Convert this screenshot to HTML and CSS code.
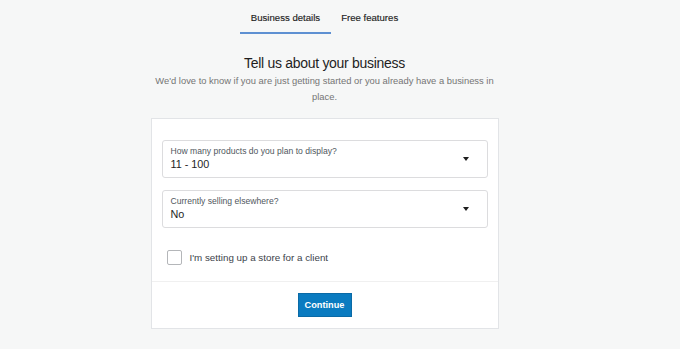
FILE: index.html
```html
<!DOCTYPE html>
<html lang="en">
<head>
  <meta charset="UTF-8" />
  <title>Business details</title>
  <link rel="stylesheet" href="styles.css">
</head>
<body>
  <div class="page">
    <nav class="tabs">
      <div class="tab active">Business details</div>
      <div class="tab">Free features</div>
    </nav>

    <h1 class="title">Tell us about your business</h1>
    <p class="subtitle">We'd love to know if you are just getting started or you already have a business in place.</p>

    <div class="card">
      <div class="card-body">
        <div class="select">
          <div class="select-text">
            <div class="select-label">How many products do you plan to display?</div>
            <div class="select-value">11 - 100</div>
          </div>
          <span class="arrow"></span>
        </div>
        <div class="select">
          <div class="select-text">
            <div class="select-label">Currently selling elsewhere?</div>
            <div class="select-value">No</div>
          </div>
          <span class="arrow"></span>
        </div>
        <label class="check">
          <span class="box"></span>
          <span>I'm setting up a store for a client</span>
        </label>
      </div>
      <div class="card-footer">
        <button class="btn">Continue</button>
      </div>
    </div>
  </div>
</body>
</html>
```

FILE: styles.css
```css
body {
  margin: 0;
  background: #f6f7f7;
  font-family: "Liberation Sans", Arial, sans-serif;
  color: #1e1e1e;
}

.page {
  width: 649px;
  display: flex;
  flex-direction: column;
  align-items: center;
}

.tabs {
  display: flex;
  height: 34px;
}

.tab {
  padding: 12px 10.5px 0;
  font-size: 9.6px;
  box-sizing: border-box;
  height: 34px;
  color: #1e1e1e;
  -webkit-text-stroke: 0.15px #1e1e1e;
}

.tab.active {
  border-bottom: 2px solid #5e90d2;
}

.title {
  margin: 20px 0 0;
  font-size: 14px;
  font-weight: 400;
  line-height: 18px;
  letter-spacing: -0.3px;
}

.subtitle {
  margin: 1px 0 0;
  width: 345px;
  text-align: center;
  font-size: 9.4px;
  line-height: 16px;
  color: #757575;
}

.card {
  margin-top: 13px;
  width: 348px;
  background: #fff;
  border: 1px solid #e2e4e7;
  box-sizing: border-box;
}

.card-body {
  padding: 21px 10px 16px;
  display: flex;
  flex-direction: column;
  gap: 12px;
}

.select {
  height: 38px;
  box-sizing: border-box;
  border: 1px solid #dcdcde;
  border-radius: 3px;
  display: flex;
  align-items: center;
  padding: 0 18px 0 8px;
}

.select-text {
  flex: 1;
}

.select-label {
  font-size: 8.6px;
  color: #50575e;
  line-height: 11px;
}

.select-value {
  font-size: 10.8px;
  line-height: 15px;
}

.arrow {
  width: 0;
  height: 0;
  border-left: 3.5px solid transparent;
  border-right: 3.5px solid transparent;
  border-top: 4px solid #1e1e1e;
}

.check {
  display: flex;
  align-items: center;
  gap: 8px;
  margin: 10px 0 0 5px;
  font-size: 9.8px;
  color: #3c434a;
}

.box {
  width: 15px;
  height: 15px;
  box-sizing: border-box;
  border: 1px solid #b4b6b9;
  border-radius: 2px;
}

.card-footer {
  border-top: 1px solid #f0f0f0;
  padding: 11px 0;
  display: flex;
  justify-content: center;
}

.btn {
  height: 24px;
  width: 54px;
  padding: 0;
  background: #0a7bc0;
  border: 1px solid #0a6aa6;
  border-radius: 0;
  color: #fff;
  font-family: inherit;
  font-size: 9.2px;
  font-weight: 700;
}
```
